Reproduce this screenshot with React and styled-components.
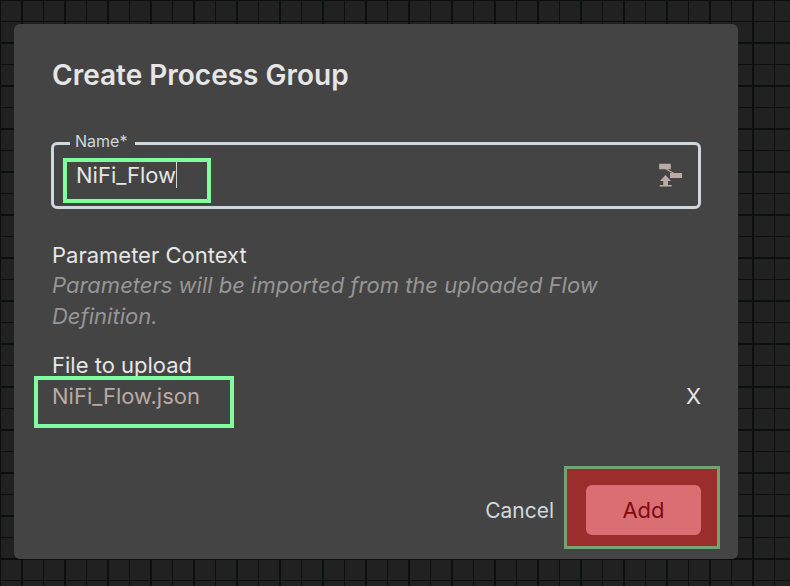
import React, { useState } from "react";
import styled, { createGlobalStyle } from "styled-components";

const GlobalStyle = createGlobalStyle`
  *, *::before, *::after { box-sizing: border-box; }
  body {
    margin: 0;
    background: #212121;
    color: #e6e6e6;
    font-family: Inter, "Noto Sans", sans-serif;
    font-size: 22px;
    line-height: 31px;
  }
  button, input { font: inherit; color: inherit; }
`;

const Canvas = styled.main`
  min-height: 100vh;
  padding: 24px 52px 27px 14px;
  background-image:
    linear-gradient(to right, #0b0f0e 1px, transparent 1px, transparent 21px, #0b0f0e 21px, #0b0f0e 23px, transparent 23px),
    linear-gradient(to bottom, #0b0f0e 2px, transparent 2px, transparent 22px, #0b0f0e 22px, #0b0f0e 23px, transparent 23px);
  background-size: 43px 43px;
  background-position: 0 0, 0 42px;
`;

const Dialog = styled.form`
  display: flex;
  flex-direction: column;
  padding: 36px 37px 24px 38px;
  border-radius: 6px;
  background: #444444;
`;

const Title = styled.h1`
  margin: 0 0 43px;
  font-size: 28px;
  line-height: 31px;
  font-weight: 600;
`;

const Field = styled.fieldset`
  display: flex;
  align-items: center;
  justify-content: space-between;
  min-width: 0;
  height: 75px;
  margin: 0 0 0 -1px;
  padding: 0 16px 0 9px;
  border: 3px solid #cfd8dc;
  border-radius: 6px;
`;

const Legend = styled.legend`
  height: 18px;
  margin-left: 7px;
  padding: 0 8px 0 5px;
  color: #cfd8dc;
  font-size: 16px;
  line-height: 14px;
`;

const Mark = styled.div`
  border: 4px solid #80ff9f;
`;

const NameMark = styled(Mark)`
  display: flex;
  align-items: flex-start;
  width: 148px;
  height: 45px;
  margin-top: 6px;
  padding-left: 9px;
`;

const NameInput = styled.input`
  field-sizing: content;
  min-width: 0;
  height: 27px;
  padding: 0;
  border: 0;
  outline: 0;
  background: transparent;
`;

const Caret = styled.span`
  width: 1px;
  height: 26px;
  background: #cfd8dc;
`;

const IconButton = styled.button`
  display: flex;
  margin-bottom: 6px;
  padding: 0;
  border: 0;
  background: transparent;
`;

const Section = styled.section`
  margin-top: ${(p) => p.$gap}px;
`;

const Heading = styled.h2`
  margin: 0;
  font-size: 22px;
  line-height: 30px;
  font-weight: 400;
`;

const Hint = styled.p`
  margin: 0;
  color: #969696;
  font-style: italic;
`;

const FileRow = styled.div`
  display: flex;
  align-items: flex-start;
  justify-content: space-between;
  margin-left: -18px;
`;

const FileMark = styled(Mark)`
  width: 200px;
  height: 52px;
  margin-top: -4px;
  padding: 1px 0 0 14px;
  color: #bcaaa4;
`;

const RemoveButton = styled.button`
  padding: 0;
  border: 0;
  background: transparent;
  line-height: 33px;
`;

const Actions = styled.footer`
  display: flex;
  align-items: center;
  justify-content: flex-end;
  gap: 32px;
  margin-top: 57px;
`;

const CancelButton = styled.button`
  padding: 0;
  border: 0;
  background: transparent;
  color: #cfd8dc;
  font-size: 21px;
`;

const AddArea = styled.div`
  position: relative;
  display: flex;

  &::before {
    content: "";
    position: absolute;
    inset: -19px -19px -14px -22px;
    border: 3px solid #70a570;
    background: #9b2d2d;
  }
`;

const AddButton = styled.button`
  position: relative;
  width: 115px;
  height: 50px;
  padding: 0;
  border: 0;
  border-radius: 6px;
  background: #da6f73;
  color: #7f0b10;
`;

function ImportIcon() {
  return (
    <svg width="24" height="26" viewBox="0 0 24 26" fill="#bcaaa4" aria-hidden="true">
      <path d="M1.2 1.8h11.6v5.4H1.2zM12 11h12v5H12z" />
      <path d="M8 7l8 4.5" stroke="#bcaaa4" strokeWidth="1.1" />
      <path d="M7.5 13l5.5 6H10v4H5.2v-4H2zM1.7 23h12v1.6h-12z" />
    </svg>
  );
}

export default function App() {
  const [name, setName] = useState("NiFi_Flow");

  return (
    <>
      <GlobalStyle />
      <Canvas>
        <Dialog role="dialog" aria-labelledby="dialog-title" onSubmit={(e) => e.preventDefault()}>
          <Title id="dialog-title">Create Process Group</Title>
          <Field>
            <Legend>
              <label htmlFor="group-name">Name*</label>
            </Legend>
            <NameMark>
              <NameInput id="group-name" type="text" value={name} onChange={(e) => setName(e.target.value)} />
              <Caret />
            </NameMark>
            <IconButton type="button" aria-label="Import from file">
              <ImportIcon />
            </IconButton>
          </Field>
          <Section $gap={31}>
            <Heading>Parameter Context</Heading>
            <Hint>Parameters will be imported from the uploaded Flow Definition.</Hint>
          </Section>
          <Section $gap={18}>
            <Heading>File to upload</Heading>
            <FileRow>
              <FileMark>NiFi_Flow.json</FileMark>
              <RemoveButton type="button" aria-label="Remove file">X</RemoveButton>
            </FileRow>
          </Section>
          <Actions>
            <CancelButton type="button">Cancel</CancelButton>
            <AddArea>
              <AddButton type="submit">Add</AddButton>
            </AddArea>
          </Actions>
        </Dialog>
      </Canvas>
    </>
  );
}
